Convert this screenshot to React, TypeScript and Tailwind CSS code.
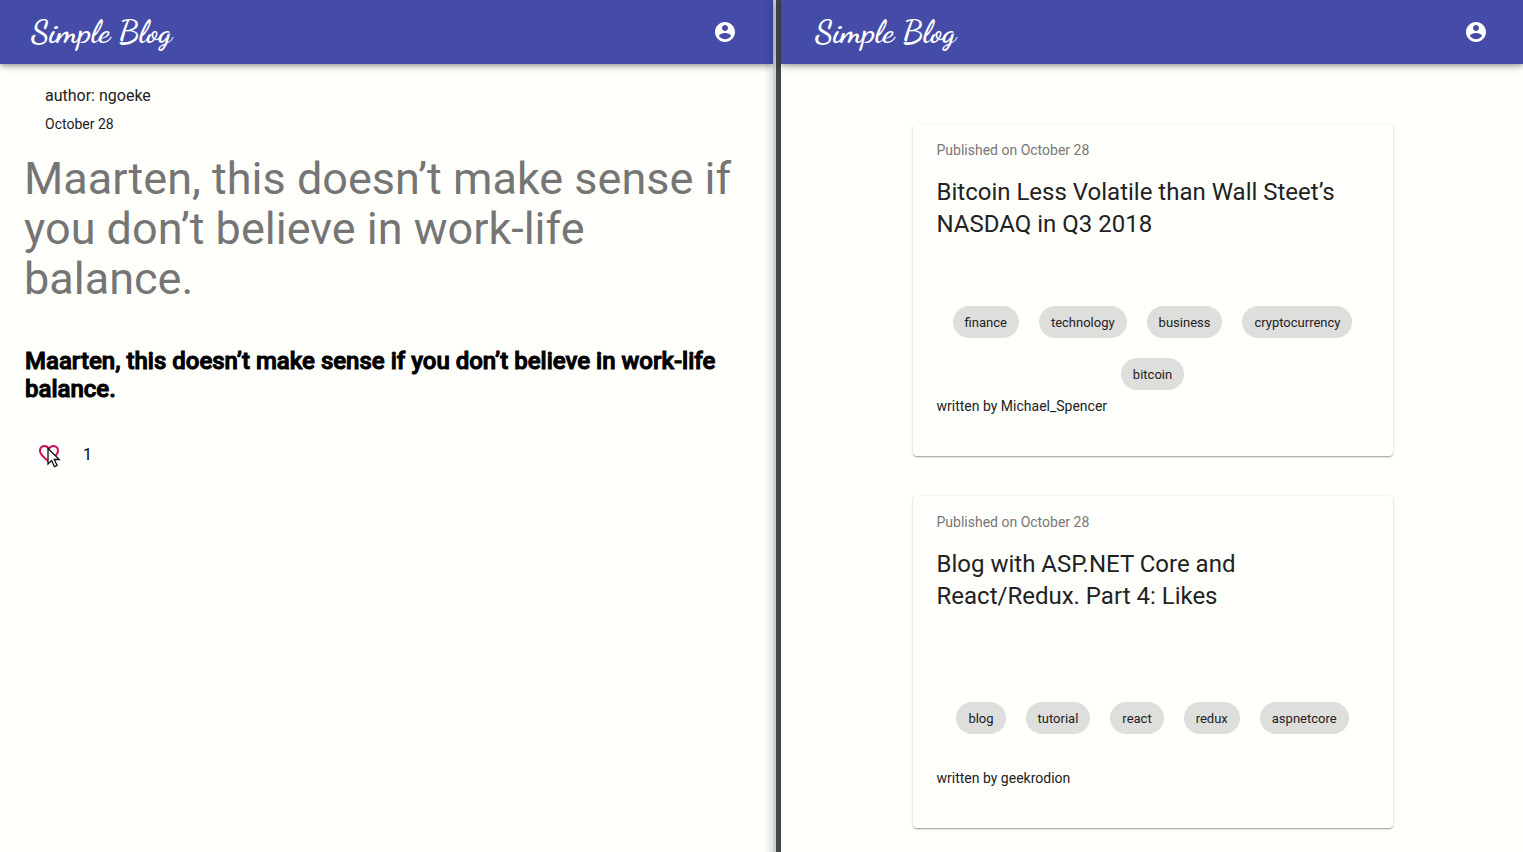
import React from "react";

type Post = {
  id: string;
  date: string;
  title: string;
  tags: string[];
  author: string;
};

const posts: Post[] = [
  {
    id: "bitcoin",
    date: "October 28",
    title: "Bitcoin Less Volatile than Wall Steet’s NASDAQ in Q3 2018",
    tags: ["finance", "technology", "business", "cryptocurrency", "bitcoin"],
    author: "Michael_Spencer",
  },
  {
    id: "likes",
    date: "October 28",
    title: "Blog with ASP.NET Core and React/Redux. Part 4: Likes",
    tags: ["blog", "tutorial", "react", "redux", "aspnetcore"],
    author: "geekrodion",
  },
];

function AccountIcon() {
  return (
    <svg viewBox="0 0 24 24" className="size-6 fill-current" aria-hidden="true">
      <path d="M12 2C6.48 2 2 6.48 2 12s4.48 10 10 10 10-4.48 10-10S17.52 2 12 2zm0 3c1.66 0 3 1.34 3 3s-1.34 3-3 3-3-1.34-3-3 1.34-3 3-3zm0 14.2c-2.5 0-4.71-1.28-6-3.22.03-1.99 4-3.08 6-3.08 1.99 0 5.97 1.09 6 3.08-1.29 1.94-3.5 3.22-6 3.22z" />
    </svg>
  );
}

function HeartIcon() {
  return (
    <svg viewBox="0 0 24 24" className="size-6 fill-[#d0105f]" aria-hidden="true">
      <path d="M16.5 3c-1.74 0-3.41.81-4.5 2.09C10.91 3.81 9.24 3 7.5 3 4.42 3 2 5.42 2 8.5c0 3.78 3.4 6.86 8.55 11.54L12 21.35l1.45-1.32C18.6 15.36 22 12.28 22 8.5 22 5.42 19.58 3 16.5 3zm-4.4 15.55l-.1.1-.1-.1C7.14 14.24 4 11.39 4 8.5 4 6.5 5.5 5 7.5 5c1.54 0 3.04.99 3.57 2.36h1.87C13.46 5.99 14.96 5 16.5 5c2 0 3.5 1.5 3.5 3.5 0 2.89-3.14 5.74-7.9 10.05z" />
    </svg>
  );
}

function Pointer() {
  return (
    <svg
      viewBox="0 0 14 21"
      className="pointer-events-none absolute left-[22px] top-[17px] h-[21px] w-3.5"
      aria-hidden="true"
    >
      <path
        d="M1 1.5V17l3.6-3.4 2.8 6 2.7-1.2-2.8-5.9h5z"
        fill="#fff"
        stroke="#111"
        strokeWidth="1.3"
      />
    </svg>
  );
}

function TopBar({ className }: { className: string }) {
  return (
    <header
      className={`flex h-16 items-center justify-between bg-[#444ca8] text-white shadow-[0_2px_4px_-1px_rgba(0,0,0,0.2),0_4px_5px_0_rgba(0,0,0,0.14),0_1px_10px_0_rgba(0,0,0,0.12)] ${className}`}
    >
      <a
        href="#home"
        className="font-['Dancing_Script','Lato',cursive] text-[32px] font-bold leading-10"
      >
        Simple Blog
      </a>
      <button type="button" aria-label="Account" className="grid size-12 place-items-center">
        <AccountIcon />
      </button>
    </header>
  );
}

function Story() {
  return (
    <section className="relative min-w-0 flex-[773]">
      <TopBar className="pl-[31px] pr-6" />
      <article>
        <div className="px-[45px] pt-5 text-[#222]">
          <p className="text-base leading-6">author: ngoeke</p>
          <p className="mt-1.5 text-sm leading-5">October 28</p>
        </div>
        <h1 className="mt-5 px-6 text-[45px] leading-[50px] text-[#757575]">
          Maarten, this doesn’t make sense if you don’t believe in work-life balance.
        </h1>
        <h2 className="mt-[43px] px-[25px] text-2xl font-medium leading-7 text-black [-webkit-text-stroke:1px_black]">
          Maarten, this doesn’t make sense if you don’t believe in work-life balance.
        </h2>
        <div className="mt-[27px] flex items-center pl-[25px] text-black">
          <button
            type="button"
            aria-label="Like"
            className="relative grid size-12 place-items-center"
          >
            <HeartIcon />
            <Pointer />
          </button>
          <span className="ml-2.5 pt-0.5 text-base leading-6">1</span>
        </div>
      </article>
      <div className="pointer-events-none absolute inset-y-0 right-0 w-2.5 bg-linear-to-l from-black/10 to-transparent" />
    </section>
  );
}

function PostCard({ post }: { post: Post }) {
  return (
    <article className="w-full max-w-[480px] rounded bg-[#fffffc] px-6 pb-10 pt-4 text-[#222] shadow-[0_1px_3px_0_rgba(0,0,0,0.2),0_1px_1px_0_rgba(0,0,0,0.14),0_2px_1px_-1px_rgba(0,0,0,0.12)]">
      <p className="text-sm leading-5 text-[#777]">Published on {post.date}</p>
      <h2 className="mt-4 text-2xl leading-8">{post.title}</h2>
      <ul className="mt-14 flex h-[100px] flex-wrap items-center justify-center">
        {post.tags.map((tag) => (
          <li
            key={tag}
            className="m-2.5 flex h-8 items-center rounded-full bg-[#dededc] px-3 pt-px text-[13px] leading-4"
          >
            {tag}
          </li>
        ))}
      </ul>
      <p className="text-sm leading-5">written by {post.author}</p>
    </article>
  );
}

export default function App() {
  return (
    <div className="flex min-h-screen bg-[#fffffc] font-['Roboto',sans-serif]">
      <Story />
      <div className="w-2 shrink-0 border-l-[3px] border-[#cdd2d2] bg-[#43474c]" />
      <section className="min-w-0 flex-[742]">
        <TopBar className="pl-[34px] pr-[23px]" />
        <main className="flex flex-col items-center gap-10 pb-6 pl-px pt-[60px]">
          {posts.map((post) => (
            <PostCard key={post.id} post={post} />
          ))}
        </main>
      </section>
    </div>
  );
}
